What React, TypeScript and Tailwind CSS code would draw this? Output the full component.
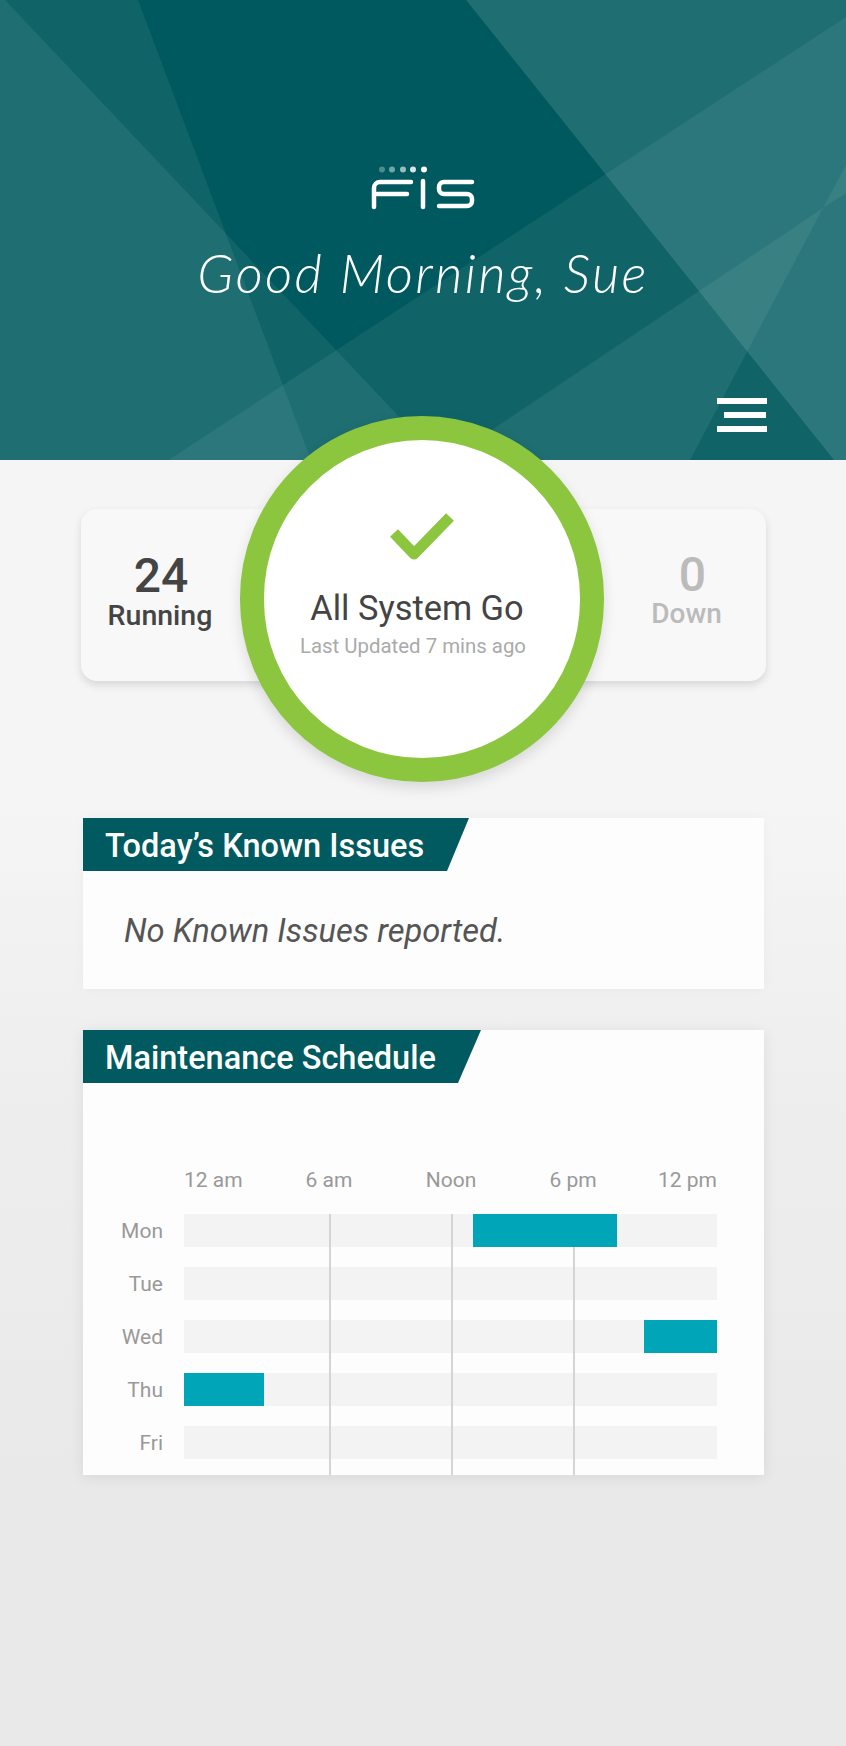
const rows = [
  { day: 'Mon', slot: 'ml-[289px] w-[144px]' },
  { day: 'Tue', slot: '' },
  { day: 'Wed', slot: 'ml-[460px] w-[73px]' },
  { day: 'Thu', slot: 'ml-0 w-[80px]' },
  { day: 'Fri', slot: '' },
];

function HeaderShapes() {
  return (
    <svg
      className="absolute inset-0"
      width="846"
      height="460"
      viewBox="0 0 846 460"
      aria-hidden
    >
      <g fill="#f0ffff" fillOpacity="0.066">
        <polygon points="0,0 138,0 311,460 0,460" />
        <polygon points="0,0 5,0 440,460 0,460" />
        <polygon points="170,459 846,17 846,460 170,460" />
        <polygon points="447,460 823,208 690,460" />
        <polygon points="823,208 846,165 846,193" />
        <polygon points="466,0 846,0 846,460 834,460" />
        <polygon points="466,0 846,0 846,460 834,460" />
      </g>
    </svg>
  );
}

function FisLogo() {
  return (
    <svg width="104" height="44" viewBox="0 0 104 44" fill="none" aria-hidden>
      <g fill="#fff">
        <circle cx="11" cy="3.5" r="3" fillOpacity="0.3" />
        <circle cx="21" cy="3.5" r="3" fillOpacity="0.45" />
        <circle cx="32" cy="3.5" r="3" fillOpacity="0.6" />
        <circle cx="42" cy="3.5" r="3" fillOpacity="0.85" />
        <circle cx="53" cy="3.5" r="3" />
      </g>
      <g stroke="#fff" strokeWidth="4.5" strokeLinecap="round" strokeLinejoin="round">
        <path d="M3 41V22a6 6 0 0 1 6-6h31" />
        <path d="M6 28h30" />
        <path d="M52 15v26" />
        <path d="M101 16H73a5 5 0 0 0-5 5v2a5 5 0 0 0 5 5h23a5 5 0 0 1 5 5v2a5 5 0 0 1-5 5H68" />
      </g>
    </svg>
  );
}

function TagHeading({ title, className }: { title: string; className: string }) {
  return (
    <div
      className={`flex h-[53px] items-center pt-[3px] pl-[22px] text-[32.5px] font-medium text-white bg-[#005a5f] ${className}`}
    >
      {title}
    </div>
  );
}

export default function App() {
  return (
    <div className="h-[1746px] w-[846px] overflow-hidden bg-[linear-gradient(to_bottom,#f5f5f5_0%,#f5f5f5_46%,#eeeeee_62%,#e9e9e9_85%,#e9e9e9_100%)] font-['Roboto',sans-serif]">
      <header className="relative flex h-[460px] flex-col items-center bg-[#00595e] pt-[166px]">
        <HeaderShapes />
        <div className="relative">
          <FisLogo />
        </div>
        <h1 className="relative mt-[31px] font-['Lato',sans-serif] text-[53px] font-light tracking-[2.3px] italic leading-[64px] text-white">
          Good Morning, Sue
        </h1>
        <div className="relative mt-auto mb-[28px] flex w-full justify-end pr-[79px]">
          <div className="flex w-[50px] flex-col items-end gap-[8px]">
            <span className="h-[6px] w-full bg-white" />
            <span className="mr-[1px] h-[6px] w-[42px] bg-white" />
            <span className="h-[6px] w-full bg-white" />
          </div>
        </div>
      </header>

      <main className="flex flex-col pr-[82px] pl-[83px]">
        <section className="relative -mx-[2px] mt-[49px] flex h-[172px] justify-between rounded-[16px] bg-[#f8f8f8] pt-[42px] pr-[44px] pl-[27px] shadow-[0_4px_8px_rgba(0,0,0,0.12)]">
          <div className="flex w-[104px] flex-col items-center text-[#444]">
            <span className="ml-[2px] text-[48px] leading-[50px] font-medium">24</span>
            <span className="text-[28.5px] leading-[30px] font-medium">Running</span>
          </div>
          <div className="flex w-[71px] flex-col items-center text-[#bbb]">
            <span className="ml-[12px] text-[48px] leading-[48px] font-medium">0</span>
            <span className="text-[28px] leading-[30px] font-medium">Down</span>
          </div>

          <div className="absolute top-[-93px] left-[159px] flex h-[366px] w-[364px] flex-col items-center rounded-full border-[24px] border-[#8cc63f] bg-white pt-[71px] shadow-[0_6px_14px_rgba(0,0,0,0.12)]">
            <svg width="66" height="50" viewBox="0 0 66 50" fill="none" aria-hidden>
              <path d="M5 22 L25 43 L61 6" stroke="#8cc63f" strokeWidth="11" strokeLinejoin="round" />
            </svg>
            <p className="mt-[27px] mr-[10px] text-[34.4px] leading-[40px] text-[#444]">All System Go</p>
            <p className="mt-[6px] mr-[18px] text-[20.4px] leading-[24px] text-[#aaa]">Last Updated 7 mins ago</p>
          </div>
        </section>

        <section className="mt-[137px] h-[171px] bg-[#fdfdfd] shadow-[0_0_12px_rgba(0,0,0,0.03)]">
          <TagHeading
            title="Today’s Known Issues"
            className="w-[386px] [clip-path:polygon(0_0,100%_0,364px_100%,0_100%)]"
          />
          <p className="mt-[40px] pl-[41px] text-[32.7px] leading-[40px] italic text-[#555]">
            No Known Issues reported.
          </p>
        </section>

        <section className="relative mt-[41px] h-[445px] bg-[#fdfdfd] shadow-[0_2px_14px_rgba(0,0,0,0.08)]">
          <TagHeading
            title="Maintenance Schedule"
            className="w-[398px] [clip-path:polygon(0_0,100%_0,375px_100%,0_100%)]"
          />
          <div className="pt-[84px] pl-[101px]">
            <div className="grid w-[533px] grid-cols-[84px_122px_122px_122px_83px] text-[21px] leading-[26px] text-[#999]">
              <span>12 am</span>
              <span className="text-center">6 am</span>
              <span className="text-center">Noon</span>
              <span className="text-center">6 pm</span>
              <span className="text-right">12 pm</span>
            </div>
          </div>
          <div className="mt-[21px] flex flex-col gap-[20px] pl-[26px]">
            {rows.map((row) => (
              <div key={row.day} className="flex h-[33px] items-center">
                <span className="mt-[2px] w-[54px] text-right text-[21px] text-[#999]">{row.day}</span>
                <div className="ml-[21px] h-full w-[533px] bg-[#f3f3f3]">
                  {row.slot && <div className={`relative z-10 h-full bg-[#00a5b8] ${row.slot}`} />}
                </div>
              </div>
            ))}
          </div>
          <span className="absolute top-[184px] bottom-0 left-[246px] w-[2px] bg-[#d4d4d4]" />
          <span className="absolute top-[184px] bottom-0 left-[368px] w-[2px] bg-[#d4d4d4]" />
          <span className="absolute top-[184px] bottom-0 left-[490px] w-[2px] bg-[#d4d4d4]" />
        </section>
      </main>
    </div>
  );
}
